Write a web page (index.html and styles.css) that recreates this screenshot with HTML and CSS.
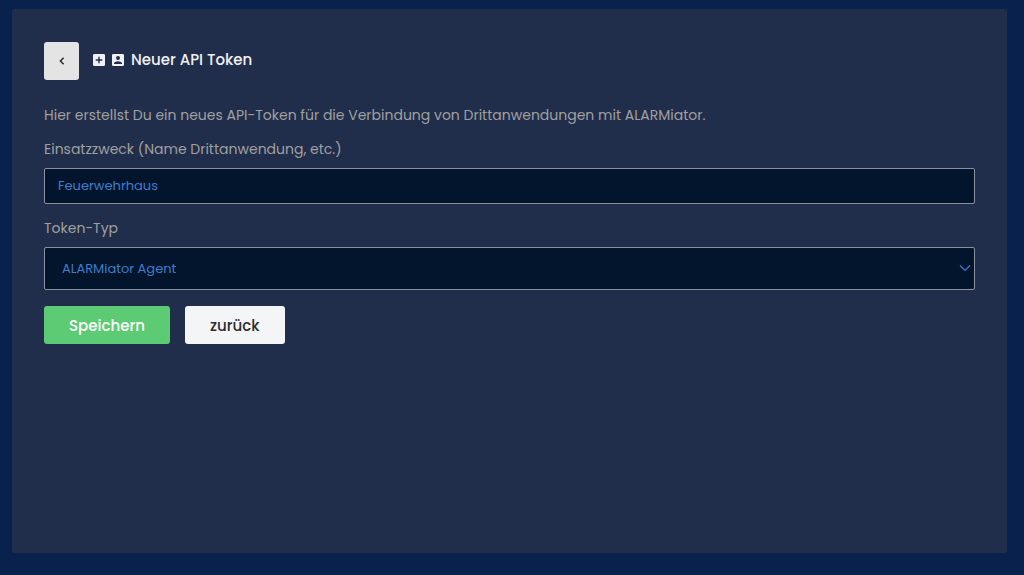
FILE: index.html
```html
<!DOCTYPE html>
<html lang="de">
<head>
<meta charset="utf-8">
<meta name="viewport" content="width=device-width, initial-scale=1">
<title>Neuer API Token</title>
<link rel="stylesheet" href="styles.css">
</head>
<body>
<main class="card">
  <header class="card-header">
    <button class="btn-back" type="button" aria-label="Zurück">
      <svg width="6" height="8" viewBox="0 0 6 8" aria-hidden="true"><path d="M4.6 .8 1.4 4l3.2 3.2" fill="none" stroke="currentColor" stroke-width="1.4"/></svg>
    </button>
    <h1 class="title">
      <svg class="title-icon" viewBox="0 0 12 12" aria-hidden="true"><path fill="currentColor" fill-rule="evenodd" d="M1.3 0h9.4Q12 0 12 1.3v9.4q0 1.3-1.3 1.3H1.3Q0 12 0 10.7V1.3Q0 0 1.3 0zM5.3 2.7v2.6H2.7v1.4h2.6v2.6h1.4V6.7h2.6V5.3H6.7V2.7z"/></svg>
      <svg class="title-icon" viewBox="0 0 12 12" aria-hidden="true"><path fill="currentColor" fill-rule="evenodd" d="M1.3 0h9.4Q12 0 12 1.3v9.4q0 1.3-1.3 1.3H1.3Q0 12 0 10.7V1.3Q0 0 1.3 0zM6 2a2 2 0 1 0 0 4 2 2 0 0 0 0-4zM2 9.9h8v-.6C10 7.900 7.300 7.200 6 7.200S2 7.900 2 9.300z"/></svg>
      <span>Neuer API Token</span>
    </h1>
  </header>
  <p class="intro">Hier erstellst Du ein neues API-Token für die Verbindung von Drittanwendungen mit ALARMiator.</p>
  <form class="form">
    <label class="label" for="purpose">Einsatzzweck (Name Drittanwendung, etc.)</label>
    <input class="control control-text" id="purpose" type="text" value="Feuerwehrhaus">
    <label class="label" for="token-type">Token-Typ</label>
    <div class="select-wrap">
      <select class="control control-select" id="token-type">
        <option>ALARMiator Agent</option>
      </select>
      <svg class="chevron" width="12" height="8" viewBox="0 0 12 8" aria-hidden="true"><path d="M1 1.500 6 6.500l5-5" fill="none" stroke="currentColor" stroke-width="1.2"/></svg>
    </div>
    <div class="actions">
      <button class="btn btn-save" type="submit">Speichern</button>
      <button class="btn btn-cancel" type="button">zurück</button>
    </div>
  </form>
</main>
</body>
</html>
```

FILE: styles.css
```css
*, *::before, *::after {
  box-sizing: border-box;
}

body {
  display: flex;
  min-height: 100vh;
  margin: 0;
  padding: 9px 17px 22px 12px;
  background: #09224d;
  color: #a0a0a0;
  font-family: Poppins, Inter, "Open Sans", sans-serif;
  font-size: 14px;
  line-height: 24px;
}

.card {
  flex: 1;
  padding: 33px 32px;
  border-radius: 2px;
  background: #202e4b;
}

.card-header {
  display: flex;
  align-items: center;
  gap: 14px;
  margin-bottom: 23px;
}

.btn-back {
  display: flex;
  align-items: center;
  justify-content: center;
  width: 35px;
  height: 38px;
  padding: 0;
  border: 0;
  border-radius: 3px;
  background: #e4e4e4;
  color: #222;
}

.title {
  display: flex;
  align-items: center;
  gap: 7px;
  margin: 0;
  padding-bottom: 2px;
  color: #f0f0f2;
  font-size: 15px;
  font-weight: 500;
  line-height: 24px;
}

.title-icon {
  width: 12px;
  height: 12px;
}

.intro {
  margin: 0 0 10px;
}

.form {
  display: flex;
  flex-direction: column;
}

.label {
  margin-bottom: 7px;
}

.control {
  width: 100%;
  border: 1px solid #8b929d;
  border-radius: 2px;
  background: #03152d;
  color: #3f7dcb;
  font-family: inherit;
  font-size: 13px;
  font-weight: 400;
}

.control-text {
  height: 36px;
  margin-bottom: 12px;
  padding: 0 13px;
}

.select-wrap {
  position: relative;
}

.control-select {
  display: block;
  height: 43px;
  padding: 0 17px;
  appearance: none;
}

.chevron {
  position: absolute;
  top: 17px;
  right: 4px;
  color: #3f7dcb;
  pointer-events: none;
}

.actions {
  display: flex;
  gap: 15px;
  margin-top: 16px;
}

.btn {
  height: 38px;
  padding: 0 25px;
  border: 0;
  border-radius: 3px;
  font-family: inherit;
  font-size: 15px;
  font-weight: 500;
}

.btn-save {
  background: #5dcb74;
  color: #fff;
}

.btn-cancel {
  background: #f4f5f7;
  color: #2b2b2b;
}
```
